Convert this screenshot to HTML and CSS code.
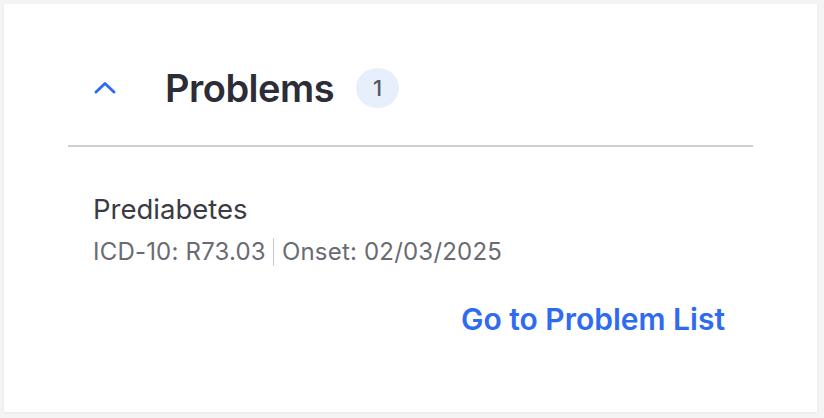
FILE: index.html
```html
<!DOCTYPE html>
<html>
<head>
<meta charset="utf-8">
<link rel="stylesheet" href="styles.css">
</head>
<body>
<section class="card">
  <header class="head">
    <svg class="chev" width="24" height="16" viewBox="0 0 24 16"><path d="M3 13 L12 4.5 L21 13" fill="none" stroke="#2f6bf6" stroke-width="3" stroke-linecap="round" stroke-linejoin="round"/></svg>
    <h2 class="title">Problems</h2>
    <span class="badge">1</span>
  </header>
  <div class="body">
    <div class="name">Prediabetes</div>
    <div class="meta"><span>ICD-10: R73.03</span><span class="sep"></span><span>Onset: 02/03/2025</span></div>
    <div class="actions"><a class="link" href="#">Go to Problem List</a></div>
  </div>
</section>
</body>
</html>
```
FILE: styles.css
```css
html, body { margin: 0; padding: 0; }
body {
  background: #f4f4f4;
  font-family: Inter, "Noto Sans", sans-serif;
  width: 824px;
  height: 418px;
  overflow: hidden;
}
.card {
  margin: 4px 0 0 4px;
  width: 813px;
  height: 408px;
  box-sizing: border-box;
  background: #fff;
  box-shadow: 0 1px 3px rgba(0,0,0,0.06);
  padding: 0 64px;
}
.head {
  height: 143px;
  box-sizing: border-box;
  padding-top: 60px;
  padding-left: 25px;
  display: flex;
  align-items: flex-start;
  border-bottom: 2px solid #cfcfd2;
}
.chev { margin-top: 15px; }
.title {
  margin: 0 0 0 48px;
  font-size: 38px;
  font-weight: 600;
  color: #2c2d36;
  line-height: 48px;
  letter-spacing: -0.5px;
}
.badge {
  margin: 4px 0 0 22px;
  width: 43px;
  height: 40px;
  border-radius: 50%;
  background: #e8effc;
  color: #55585f;
  font-size: 22px;
  font-weight: 500;
  display: flex;
  align-items: center;
  justify-content: center;
}
.body { padding: 45px 28px 0 25px; }
.name {
  font-size: 27.5px;
  color: #3a3b44;
  line-height: 34px;
}
.meta {
  margin-top: 11px;
  font-size: 24px;
  color: #6a6b72;
  line-height: 30px;
  letter-spacing: 0.2px;
  display: flex;
  align-items: center;
}
.sep {
  width: 1px;
  height: 28px;
  background: #c8c8cc;
  margin: 0 8px 0 7px;
}
.actions {
  display: flex;
  justify-content: flex-end;
  margin-top: 34px;
}
.link {
  font-size: 30px;
  font-weight: 600;
  color: #2f6bf0;
  text-decoration: none;
  line-height: 36px;
}
```
